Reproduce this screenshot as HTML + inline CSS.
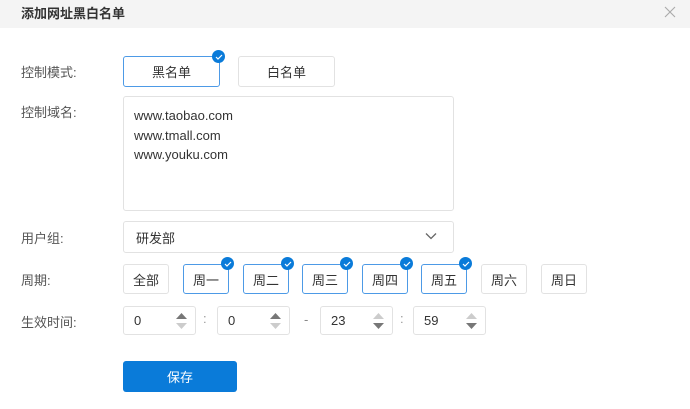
<!DOCTYPE html>
<html><head><meta charset="utf-8"><style>
*{box-sizing:border-box;margin:0;padding:0}
body{width:690px;height:409px;background:#fff;position:relative;overflow:hidden;font-family:"Liberation Sans","Noto Sans CJK SC",sans-serif;font-size:13px;color:#333}
.a{position:absolute}
.hd{left:0;top:0;width:690px;height:28px;background:#f4f4f4}
.title{left:21px;top:3px;font-size:13px;font-weight:bold;color:#333}
.lbl{left:21px;color:#555}
.box{border:1px solid #e2e2e2;border-radius:3px;background:#fff;display:flex;align-items:center;justify-content:center}
.sel{border-color:#4d9ae6}
.chk{width:13px;height:13px;border-radius:50%;background:#0a7bd9;display:flex;align-items:center;justify-content:center}
.num{justify-content:flex-start;padding-left:10px}
.sp{position:absolute;right:7px;top:5px;width:13px;height:18px}
</style></head><body>
<div class="a hd"></div>
<div class="a title">添加网址黑白名单</div>
<svg class="a" style="left:664px;top:6px" width="12" height="12" viewBox="0 0 12 12"><path d="M1 1L11 11M11 1L1 11" stroke="#aaa" stroke-width="1.1"/></svg>

<div class="a lbl" style="top:62px">控制模式:</div>
<div class="a box sel" style="left:123px;top:56px;width:97px;height:31px">黑名单</div>
<div class="a box" style="left:238px;top:56px;width:97px;height:31px">白名单</div>

<div class="a lbl" style="top:102px">控制域名:</div>
<div class="a box" style="left:123px;top:96px;width:331px;height:115px;display:block;padding:9px 10px;line-height:19.5px;color:#333">www.taobao.com<br>www.tmall.com<br>www.youku.com</div>

<div class="a lbl" style="top:228px">用户组:</div>
<div class="a box" style="left:123px;top:221px;width:331px;height:32px;justify-content:flex-start;padding-left:12px">研发部</div>
<svg class="a" style="left:425px;top:232px" width="12" height="8" viewBox="0 0 12 8"><path d="M1 1.5L6 6.5L11 1.5" fill="none" stroke="#666" stroke-width="1.3"/></svg>

<div class="a lbl" style="top:270px">周期:</div>
<div class="a box" style="left:123px;top:264px;width:46px;height:30px">全部</div>
<div class="a box sel" style="left:183px;top:264px;width:46px;height:30px">周一</div>
<div class="a box sel" style="left:243px;top:264px;width:46px;height:30px">周二</div>
<div class="a box sel" style="left:302px;top:264px;width:46px;height:30px">周三</div>
<div class="a box sel" style="left:362px;top:264px;width:46px;height:30px">周四</div>
<div class="a box sel" style="left:421px;top:264px;width:46px;height:30px">周五</div>
<div class="a box" style="left:481px;top:264px;width:46px;height:30px">周六</div>
<div class="a box" style="left:541px;top:264px;width:46px;height:30px">周日</div>

<div class="a lbl" style="top:312px">生效时间:</div>
<div class="a box num" style="left:123px;top:306px;width:73px;height:29px">0<svg class="sp" viewBox="0 0 13 18"><path d="M1 7L6.5 1L12 7Z" fill="#777"/><path d="M1 11L6.5 17L12 11Z" fill="#ccc"/></svg></div>
<div class="a" style="left:203px;top:311px;color:#999">:</div>
<div class="a box num" style="left:217px;top:306px;width:73px;height:29px">0<svg class="sp" viewBox="0 0 13 18"><path d="M1 7L6.5 1L12 7Z" fill="#777"/><path d="M1 11L6.5 17L12 11Z" fill="#ccc"/></svg></div>
<div class="a" style="left:304px;top:312px;color:#888">-</div>
<div class="a box num" style="left:320px;top:306px;width:73px;height:29px">23<svg class="sp" viewBox="0 0 13 18"><path d="M1 7L6.5 1L12 7Z" fill="#ccc"/><path d="M1 11L6.5 17L12 11Z" fill="#777"/></svg></div>
<div class="a" style="left:400px;top:311px;color:#999">:</div>
<div class="a box num" style="left:413px;top:306px;width:73px;height:29px">59<svg class="sp" viewBox="0 0 13 18"><path d="M1 7L6.5 1L12 7Z" fill="#ccc"/><path d="M1 11L6.5 17L12 11Z" fill="#777"/></svg></div>

<div class="a" style="left:123px;top:361px;width:114px;height:31px;background:#0a7bd9;border-radius:3px;color:#fff;display:flex;align-items:center;justify-content:center">保存</div>

<div class="a chk" style="left:212px;top:50px"><svg width="8" height="6" viewBox="0 0 8 6"><path d="M1 3L3 5L7 1" fill="none" stroke="#fff" stroke-width="1.2"/></svg></div>
<div class="a chk" style="left:221px;top:257px"><svg width="8" height="6" viewBox="0 0 8 6"><path d="M1 3L3 5L7 1" fill="none" stroke="#fff" stroke-width="1.2"/></svg></div>
<div class="a chk" style="left:281px;top:257px"><svg width="8" height="6" viewBox="0 0 8 6"><path d="M1 3L3 5L7 1" fill="none" stroke="#fff" stroke-width="1.2"/></svg></div>
<div class="a chk" style="left:340px;top:257px"><svg width="8" height="6" viewBox="0 0 8 6"><path d="M1 3L3 5L7 1" fill="none" stroke="#fff" stroke-width="1.2"/></svg></div>
<div class="a chk" style="left:400px;top:257px"><svg width="8" height="6" viewBox="0 0 8 6"><path d="M1 3L3 5L7 1" fill="none" stroke="#fff" stroke-width="1.2"/></svg></div>
<div class="a chk" style="left:459px;top:257px"><svg width="8" height="6" viewBox="0 0 8 6"><path d="M1 3L3 5L7 1" fill="none" stroke="#fff" stroke-width="1.2"/></svg></div>
</body></html>
